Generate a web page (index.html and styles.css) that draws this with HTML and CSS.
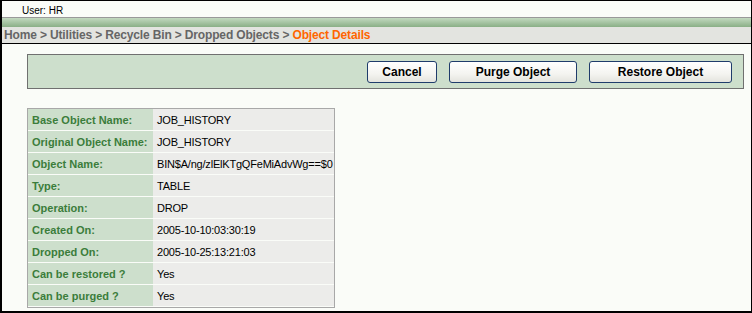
FILE: index.html
```html
<!DOCTYPE html>
<html lang="en">

<head>
    <meta charset="UTF-8">
    <title>Object Details</title>
    <link rel="stylesheet" href="styles.css">
</head>

<body>
    <div class="window">
        <div class="user">User: HR</div>
        <div class="band"></div>
        <div class="crumbs">
            Home &gt; Utilities &gt; Recycle Bin &gt; Dropped Objects &gt; <span class="current">Object Details</span>
        </div>

        <div class="content">
            <!-- Actions -->
            <div class="actions">
                <button class="btn btn-cancel">Cancel</button>
                <button class="btn btn-purge">Purge Object</button>
                <button class="btn btn-restore">Restore Object</button>
            </div>

            <!-- Details -->
            <table class="details">
                <tr><td class="label">Base Object Name:</td><td class="value">JOB_HISTORY</td></tr>
                <tr><td class="label">Original Object Name:</td><td class="value">JOB_HISTORY</td></tr>
                <tr><td class="label">Object Name:</td><td class="value">BIN$A/ng/zlElKTgQFeMiAdvWg==$0</td></tr>
                <tr><td class="label">Type:</td><td class="value">TABLE</td></tr>
                <tr><td class="label">Operation:</td><td class="value">DROP</td></tr>
                <tr><td class="label">Created On:</td><td class="value">2005-10-10:03:30:19</td></tr>
                <tr><td class="label">Dropped On:</td><td class="value">2005-10-25:13:21:03</td></tr>
                <tr><td class="label">Can be restored ?</td><td class="value">Yes</td></tr>
                <tr><td class="label">Can be purged ?</td><td class="value">Yes</td></tr>
            </table>
        </div>
    </div>
</body>

</html>
```

FILE: styles.css
```css
* {
    box-sizing: border-box;
}

body {
    margin: 0;
    font-family: "Liberation Sans", Arial, sans-serif;
    background-color: #fafcf8;
}

.window {
    height: 313px;
    border-top: 1px solid #000;
    border-left: 2px solid #000;
    border-right: 1px solid #000;
    border-bottom: 2px solid #000;
    background-color: #fafcf8;
}

.user {
    height: 16px;
    padding: 4px 0 0 20px;
    font-size: 10px;
    line-height: 12px;
    color: #000;
}

.band {
    height: 10px;
    border-top: 1px solid #999;
    background: linear-gradient(to bottom, #c3d9c0, #a6c4a3 50%, #8aaf86);
}

.crumbs {
    height: 17px;
    padding-left: 2px;
    background-color: #e3e4e0;
    border-bottom: 1px solid #000;
    font-size: 12px;
    font-weight: bold;
    line-height: 16px;
    color: #666;
    letter-spacing: -0.15px;
    white-space: nowrap;
}

.crumbs .current {
    color: #ff6600;
}

.content {
    padding: 10px 7px 0 25px;
}

.actions {
    display: flex;
    justify-content: flex-end;
    align-items: center;
    gap: 12px;
    height: 35px;
    padding: 1px 11px 0 0;
    border: 1px solid #707070;
    background-color: #cddfcc;
}

.btn {
    height: 22px;
    padding: 0;
    border: 1px solid #1f3c6b;
    border-radius: 3px;
    background: linear-gradient(to bottom, #ffffff, #f4f4f0 60%, #e4e4de);
    font-family: "Liberation Sans", Arial, sans-serif;
    font-size: 12px;
    font-weight: bold;
    color: #000;
    cursor: pointer;
}

.btn-cancel {
    width: 70px;
}

.btn-purge {
    width: 128px;
}

.btn-restore {
    width: 143px;
}

.details {
    width: 308px;
    margin-top: 19px;
    table-layout: fixed;
    border: 1px solid #a8a8a8;
    border-spacing: 0;
    font-size: 11px;
}

.details td {
    height: 22px;
    padding: 0 0 0 4px;
    border-bottom: 1px solid #fafcf8;
    white-space: nowrap;
    overflow: hidden;
}

.details .label {
    width: 125px;
    background-color: #cddfcc;
    color: #3b7d3b;
    font-weight: bold;
}

.details .value {
    width: 181px;
    background-color: #ececea;
    color: #000;
    letter-spacing: -0.2px;
}
```
